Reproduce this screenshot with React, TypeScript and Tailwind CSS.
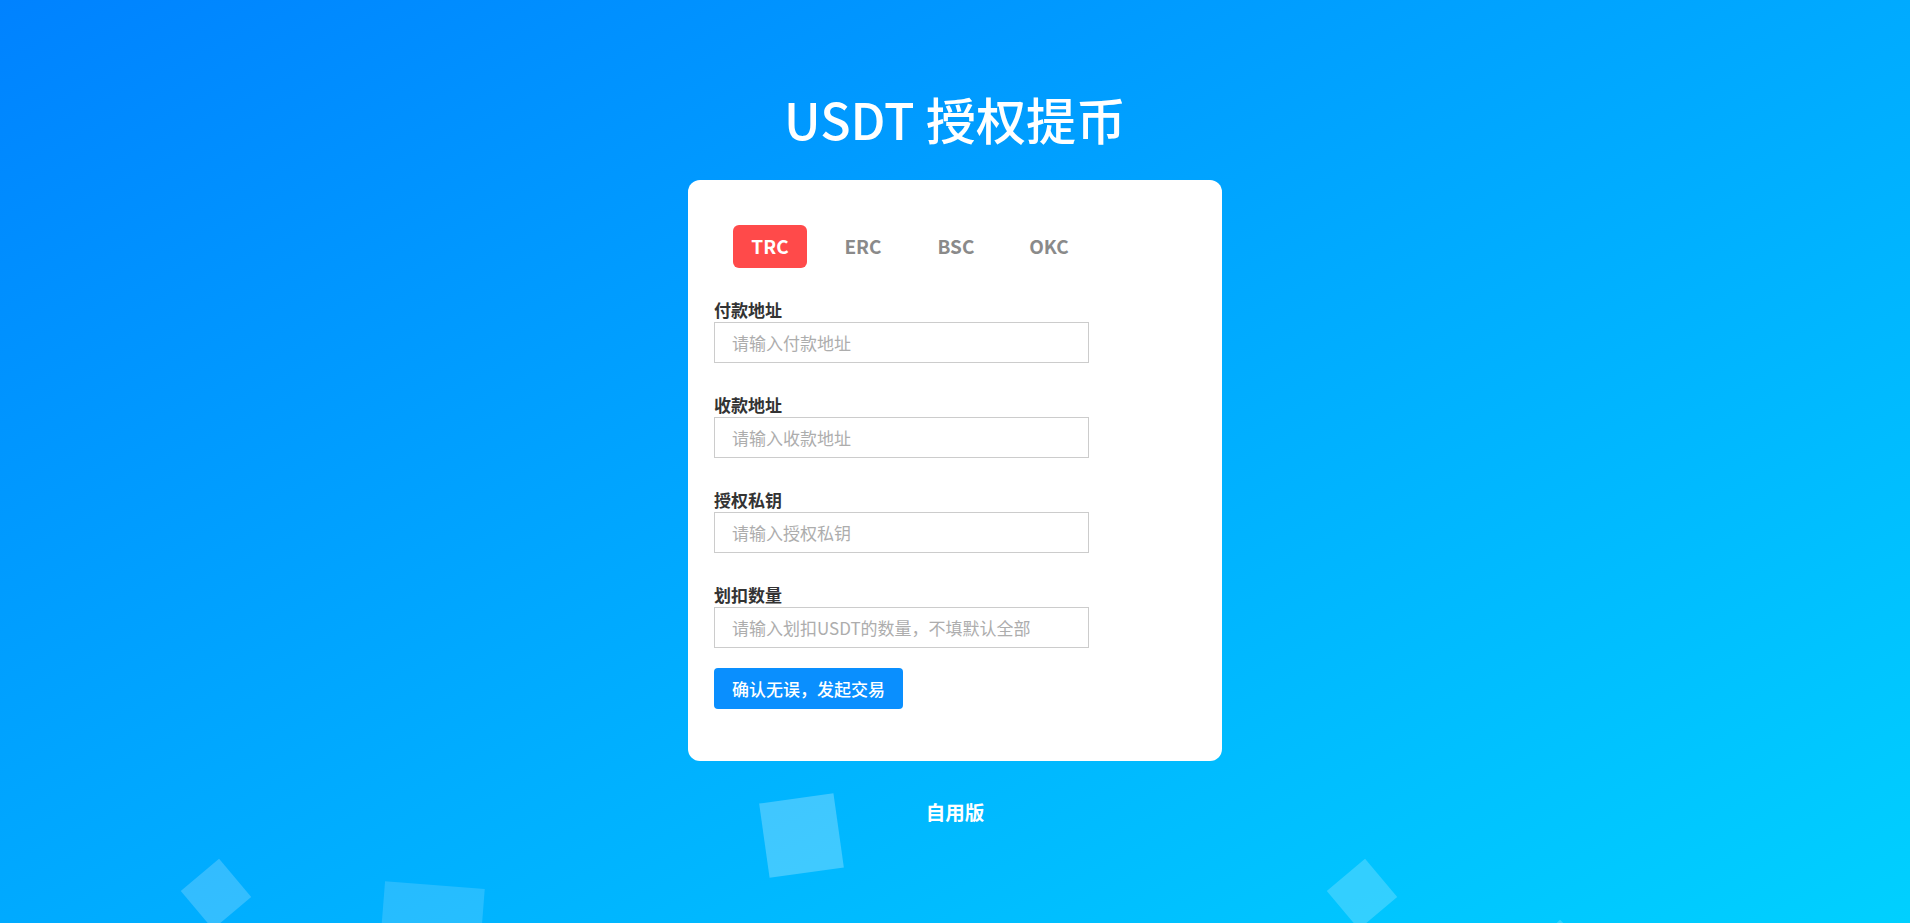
import { useState } from 'react';

const chains = ['TRC', 'ERC', 'BSC', 'OKC'];

const fields = [
  { label: '付款地址', placeholder: '请输入付款地址' },
  { label: '收款地址', placeholder: '请输入收款地址' },
  { label: '授权私钥', placeholder: '请输入授权私钥' },
  { label: '划扣数量', placeholder: '请输入划扣USDT的数量，不填默认全部' },
];

function Bubbles() {
  return (
    <>
      <div className="absolute left-[191px] top-[869px] h-[50px] w-[50px] rotate-[50deg] bg-white/20" />
      <div className="absolute left-[381px] top-[885px] h-[100px] w-[100px] rotate-[4.5deg] bg-white/15" />
      <div className="absolute left-[764px] top-[798px] h-[75px] w-[75px] -rotate-[8deg] bg-white/25" />
      <div className="absolute left-[1337px] top-[869px] h-[50px] w-[50px] rotate-[50deg] bg-white/20" />
      <div className="absolute left-[1540px] top-[928px] h-[40px] w-[40px] rotate-45 bg-white/20" />
    </>
  );
}

export default function App() {
  const [chain, setChain] = useState('TRC');

  return (
    <div className="relative h-[923px] w-full overflow-hidden bg-linear-to-br from-[#0082ff] to-[#00d0ff] font-['Noto_Sans_CJK_SC',sans-serif]">
      <Bubbles />
      <div className="relative flex flex-col items-center">
        <h1 className="mt-[82px] text-[50px] font-medium leading-[72px] text-white">USDT 授权提币</h1>

        <div className="mt-[26px] w-[534px] rounded-xl bg-white px-[26px] pb-[52px] pt-[45px]">
          <div className="ml-[19px] flex gap-[19px]">
            {chains.map((c) => (
              <button
                key={c}
                onClick={() => setChain(c)}
                className={
                  c === chain
                    ? 'flex h-[43px] w-[74px] items-center justify-center rounded-md bg-[#ff4a4a] text-[19px] font-bold text-white'
                    : 'flex h-[43px] w-[74px] items-center justify-center rounded-md text-[19px] font-bold text-[#8a8a8a]'
                }
              >
                {c}
              </button>
            ))}
          </div>

          <div className="mt-[32px] flex flex-col gap-[32px]">
            {fields.map((f) => (
              <div key={f.label} className="flex flex-col">
                <label className="text-[17px] font-bold leading-[20px] text-[#333]">{f.label}</label>
                <input
                  placeholder={f.placeholder}
                  className="mt-[2px] h-[41px] w-[375px] border border-[#cccccc] px-[17px] text-[17px] text-[#333] outline-none placeholder:text-[#adadad]"
                />
              </div>
            ))}
          </div>

          <button className="mt-[20px] h-[41px] w-[189px] rounded-[4px] bg-[#0a8ffe] text-[17px] font-medium text-white">
            确认无误，发起交易
          </button>
        </div>

        <div className="mt-[37px] text-[19.5px] font-bold leading-[28px] text-white">自用版</div>
      </div>
    </div>
  );
}
